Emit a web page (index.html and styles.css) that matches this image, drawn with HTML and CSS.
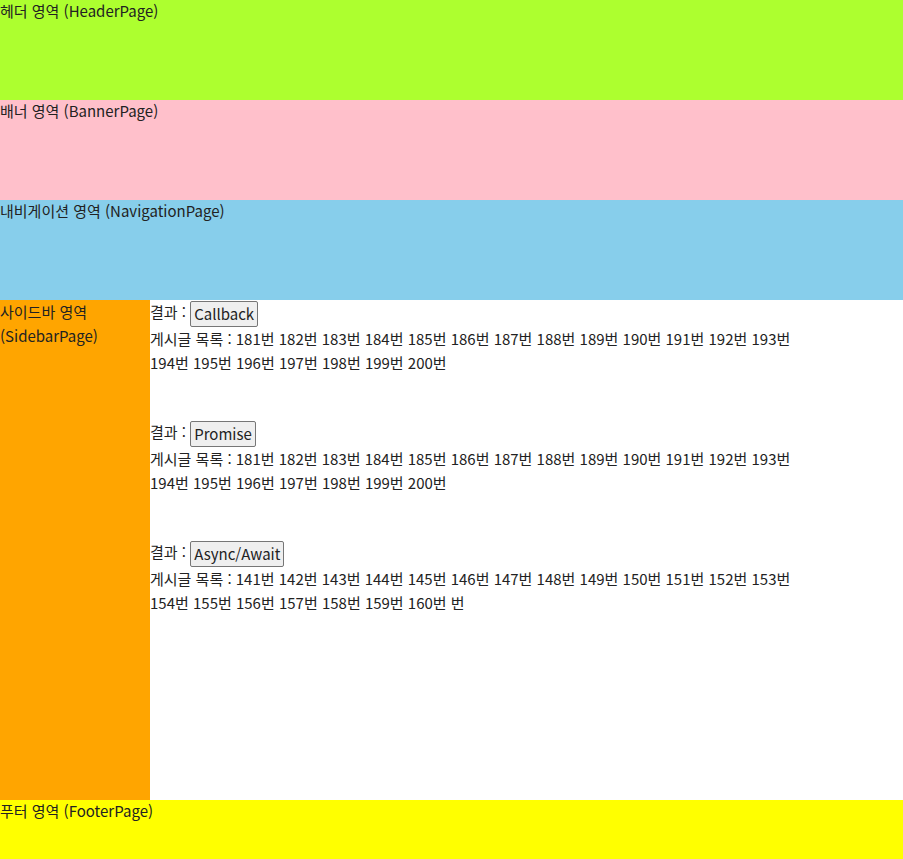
FILE: index.html
```html
<!DOCTYPE html>
<html lang="ko">
<head>
<meta charset="utf-8">
<title>Layout</title>
<link rel="stylesheet" href="styles.css">
</head>
<body>
<div class="band header">헤더 영역 (HeaderPage)</div>
<div class="band banner">배너 영역 (BannerPage)</div>
<div class="band nav">내비게이션 영역 (NavigationPage)</div>
<div class="middle">
  <div class="sidebar">사이드바 영역 (SidebarPage)</div>
  <div class="content">
    <div class="section">
      <div>결과 : <button class="btn">Callback</button></div>
      <div>게시글 목록 : 181번 182번 183번 184번 185번 186번 187번 188번 189번 190번 191번 192번 193번 194번 195번 196번 197번 198번 199번 200번</div>
    </div>
    <div class="section">
      <div>결과 : <button class="btn">Promise</button></div>
      <div>게시글 목록 : 181번 182번 183번 184번 185번 186번 187번 188번 189번 190번 191번 192번 193번 194번 195번 196번 197번 198번 199번 200번</div>
    </div>
    <div class="section">
      <div>결과 : <button class="btn">Async/Await</button></div>
      <div>게시글 목록 : 141번 142번 143번 144번 145번 146번 147번 148번 149번 150번 151번 152번 153번 154번 155번 156번 157번 158번 159번 160번 번</div>
    </div>
  </div>
</div>
<div class="band footer">푸터 영역 (FooterPage)</div>
</body>
</html>
```
FILE: styles.css
```css
html, body {
  margin: 0;
  padding: 0;
}
body {
  font-family: "Noto Sans CJK KR", "Noto Sans", sans-serif;
  font-size: 15px;
  line-height: 24px;
  color: #222;
}
.band {
  height: 100px;
  line-height: 21px;
}
.header {
  background: #adff2f;
}
.banner {
  background: #ffc0cb;
}
.nav {
  background: #87ceeb;
}
.middle {
  display: flex;
  height: 500px;
}
.sidebar {
  width: 150px;
  flex: none;
  background: #ffa500;
}
.content {
  width: 660px;
}
.section {
  height: 120px;
}
.btn {
  font-family: inherit;
  font-size: 15px;
  line-height: 20px;
  height: 26px;
  padding: 1px 3px;
  margin: 0;
  background: #efefef;
  color: #222;
  border: 1px solid #767676;
  border-radius: 2px;
  vertical-align: middle;
}
.footer {
  background: #ffff00;
}
```
